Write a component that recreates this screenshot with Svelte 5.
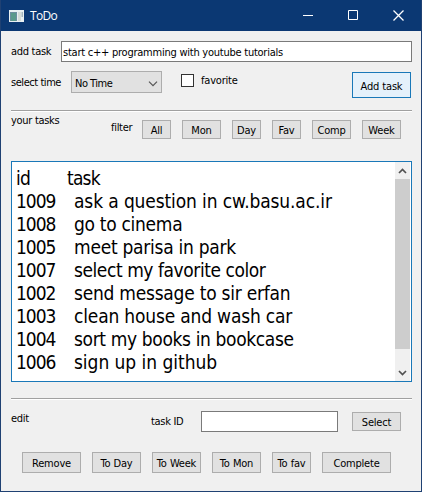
<script>
  let newTask = $state('start c++ programming with youtube tutorials');
  let favorite = $state(false);
  let taskId = $state('');
  const filters = [['All', 29], ['Mon', 39], ['Day', 29], ['Fav', 29], ['Comp', 39], ['Week', 39]];
  const actions = [['Remove', 59], ['To Day', 49], ['To Week', 49], ['To Mon', 49], ['To fav', 39], ['Complete', 69]];
  // id, text, letter spacing in px
  const tasks = [
    [1009, 'ask a question in cw.basu.ac.ir', -0.12],
    [1008, 'go to cinema', -0.3],
    [1005, 'meet parisa in park', -0.27],
    [1007, 'select my favorite color', -0.44],
    [1002, 'send message to sir erfan', -0.24],
    [1003, 'clean house and wash car', -0.18],
    [1004, 'sort my books in bookcase', -0.36],
    [1006, 'sign up in github', -0.04]
  ];
</script>

<div class="window">
  <header>
    <svg class="logo" width="15" height="12" viewBox="0 0 15 12">
      <rect width="15" height="12" fill="#e9f0f2" />
      <rect x="1" y="2" width="7" height="9" fill="#6d8fa0" />
      <rect x="2" y="3" width="5" height="8" fill="#5b9a8c" />
      <rect x="9" y="2" width="3" height="9" fill="#d5dcd8" />
      <rect x="12.5" y="2" width="1.5" height="5" fill="#a3b5bd" />
    </svg>
    <span class="title">ToDo</span>
    <svg class="controls" width="104" height="12" viewBox="0 0 104 12" fill="none" stroke="#fff">
      <path d="M0 5.500h10M45.500 .5h9v9h-9z" />
      <path d="M90.500 .5l10 10M100.500 .5l-10 10" stroke-width="1.300" />
    </svg>
  </header>

  <main>
    <div class="add-row">
      <label for="new-task">add task</label>
      <input id="new-task" bind:value={newTask} />
    </div>
    <div class="options">
      <span class="time-label">select time</span>
      <div class="combo">
        <span>No Time</span>
        <svg width="10" height="6" viewBox="0 0 10 6" fill="none" stroke="#555" stroke-width="1.2"><path d="M1 .7l4 4 4-4" /></svg>
      </div>
      <label class="fav"><input type="checkbox" bind:checked={favorite} /><span>favorite</span></label>
      <button class="primary">Add task</button>
    </div>
    <hr />
    <div class="filters">
      <span class="heading">your tasks</span>
      <span class="filter-label">filter</span>
      {#each filters as [name, width]}
        <button style="width: {width}px">{name}</button>
      {/each}
    </div>
    <section class="list">
      <div class="rows">
        <div class="row"><span class="col">id</span><span class="head">task</span></div>
        {#each tasks as [id, text, spacing]}
          <div class="row"><span class="col id">{id}</span><span style="letter-spacing: {spacing}px">{text}</span></div>
        {/each}
      </div>
      <div class="scrollbar">
        <svg width="15" height="17" viewBox="0 0 15 17" fill="none" stroke="#505050" stroke-width="1.700"><path d="M4 11l3.500-3.500 3.500 3.500" /></svg>
        <div class="thumb"></div>
        <svg class="down" width="15" height="17" viewBox="0 0 15 17" fill="none" stroke="#505050" stroke-width="1.700"><path d="M4 7l3.500 3.500 3.500-3.500" /></svg>
      </div>
    </section>
    <hr />
    <div class="edit">
      <span class="heading">edit</span>
      <label for="task-id">task ID</label>
      <input id="task-id" bind:value={taskId} />
      <button>Select</button>
    </div>
    <div class="actions">
      {#each actions as [name, width]}
        <button style="width: {width}px">{name}</button>
      {/each}
    </div>
  </main>
</div>

<style>
  * { box-sizing: border-box; }
  .window {
    width: 422px; height: 492px; background: #f0f0f0; color: #000;
    border: 1px solid #1f4173; border-top: 0;
    font: 11px/14px 'DejaVu Sans Condensed', 'DejaVu Sans', sans-serif;
    font-stretch: condensed; letter-spacing: -0.3px; white-space: nowrap; overflow: hidden;
  }
  header { height: 31px; margin: 0 -1px; background: #0b3873; display: flex; align-items: center; padding-left: 9px; }
  .title { color: #fff; font: 12px/16px 'Open Sans', sans-serif; margin-left: 6px; letter-spacing: -0.7px; }
  .controls { margin: 0 15px 0 auto; }
  main { padding: 10px 9px 0 10px; }
  input { font: inherit; letter-spacing: inherit; color: #000; border: 1px solid #7a7a7a; border-radius: 0; background: #fff; padding: 1px 1px 0; margin: 0; outline: 0; }
  button { font: inherit; letter-spacing: -0.2px; word-spacing: 0.3px; color: #000; height: 19px; padding: 2px 0 0; margin: 0; border: 1px solid #adadad; border-radius: 0; background: #e1e1e1; flex: none; }
  .add-row { display: flex; height: 21px; align-items: center; }
  .add-row label { width: 50px; padding-top: 1px; }
  #new-task { width: 351px; height: 21px; letter-spacing: -0.24px; }
  .options { display: flex; height: 48px; padding-top: 9px; align-items: flex-start; }
  .time-label { width: 60px; padding-top: 5px; letter-spacing: -0.45px; }
  .combo { width: 91px; height: 22px; border: 1px solid #adadad; background: #e1e1e1; display: flex; align-items: center; justify-content: space-between; padding: 3px 3px 0 3px; letter-spacing: -0.5px; }
  .fav { display: flex; margin-left: 19px; padding-top: 2px; letter-spacing: -0.2px; }
  .fav span { padding-top: 1px; }
  .fav input { appearance: none; width: 13px; height: 13px; border: 1px solid #333; margin: 1px 7px 0 0; }
  .fav input:checked { background: #333; }
  .primary { width: 59px; height: 26px; margin: 1px 1px 0 auto; padding-top: 3px; border-color: #1a78b8; background: #e5f1fb; }
  hr { margin: 0; height: 2px; border: 0; border-top: 1px solid #a0a0a0; border-bottom: 1px solid #fff; }
  .filters { display: flex; height: 49px; padding-top: 8px; gap: 11px; align-items: flex-start; }
  .heading { width: 89px; margin-top: -6px; }
  .filter-label { width: 20px; padding-top: 1px; }
  .list { width: 401px; height: 221px; border: 1px solid #1a78b8; background: #fff; display: flex; padding-right: 1px; }
  .rows { flex: 1; padding: 5px 0 0 4px; font-size: 19px; line-height: 23px; letter-spacing: -0.8px; }
  .row { display: flex; height: 23px; }
  .col { width: 58px; }
  .id { letter-spacing: -1px; }
  .head { margin-left: -7px; }
  .scrollbar { width: 15px; background: #f0f0f0; display: flex; flex-direction: column; }
  .thumb { height: 170px; background: #cdcdcd; }
  .down { margin-top: auto; }
  .list + hr { margin-top: 16px; }
  .edit { display: flex; height: 52px; padding-top: 11px; align-items: flex-start; }
  .edit .heading { width: 140px; margin-top: 1px; }
  .edit label { width: 50px; margin-top: 4px; }
  #task-id { width: 137px; height: 21px; }
  .edit button { width: 49px; margin: 1px 0 0 14px; }
  .actions { display: flex; gap: 11px; padding-left: 11px; }
  .actions button { height: 21px; }
</style>
